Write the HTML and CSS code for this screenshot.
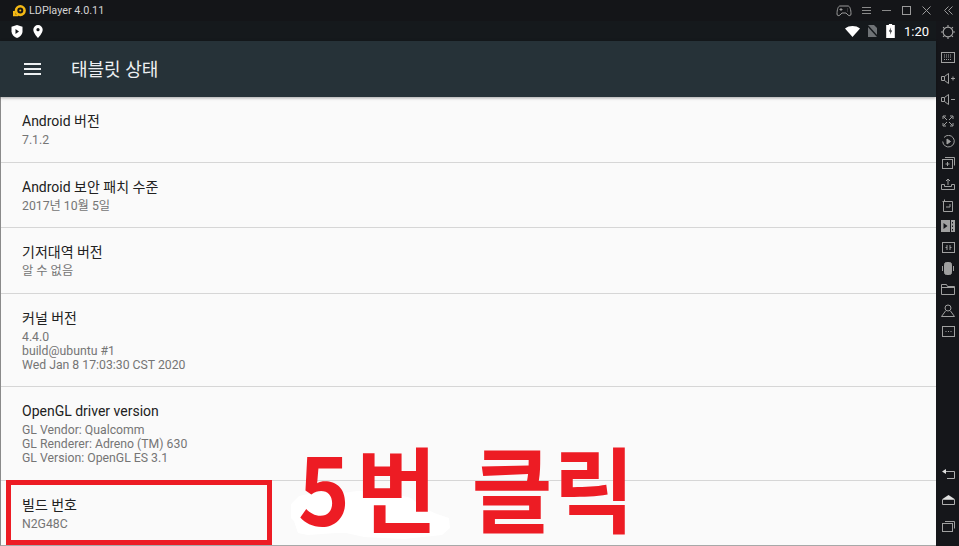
FILE: index.html
```html
<!DOCTYPE html>
<html lang="ko">

<head>
	<meta charset="utf-8">
	<title>LDPlayer</title>
	<link rel="stylesheet" href="styles.css">
</head>

<body>
	<div class="titlebar">
		<div class="title-left">
			<svg class="logo" width="14" height="12" viewBox="0 0 16 14">
				<path d="M1 7h3v4h3v2H1z" fill="#f5b915" />
				<circle cx="9.500" cy="6.500" r="5" fill="none" stroke="#f5b915" stroke-width="3" />
				<circle cx="9.500" cy="6.500" r="1.200" fill="#f5b915" />
			</svg>
			<span class="title-text">LDPlayer 4.0.11</span>
		</div>
		<div class="title-controls">
			<svg class="pad" width="16" height="12" viewBox="0 0 16 12" fill="none" stroke="#9a9a9a">
				<path d="M4 1h8c2 0 3 4 3 8 0 2-2 2-3 1l-2-2H6l-2 2c-1 1-3 1-3-1 0-4 1-8 3-8z" />
				<path d="M3.500 4.500h3M5 3v3M11 4h.5M11 6h.5" />
			</svg>
			<svg width="9" height="9" viewBox="0 0 9 9" stroke="#8a8a8a"><path d="M0 1.500h9M0 4.500h9M0 7.500h9" /></svg>
			<svg width="9" height="9" viewBox="0 0 9 9" stroke="#8a8a8a"><path d="M0 4.500h9" /></svg>
			<svg width="9" height="9" viewBox="0 0 9 9" fill="none" stroke="#9a9a9a"><rect x=".5" y=".5" width="8" height="8" /></svg>
			<svg width="9" height="9" viewBox="0 0 9 9" stroke="#9a9a9a"><path d="M.5.500l8 8M8.500.500l-8 8" /></svg>
			<svg class="collapse" width="9" height="9" viewBox="0 0 9 9" fill="none" stroke="#9a9a9a"><path d="M4.500.500l-4 4 4 4M8.500.500l-4 4 4 4" /></svg>
		</div>
	</div>
	<div class="frame">
		<div class="android">
			<div class="statusbar">
				<div class="status-left">
					<svg width="12" height="13" viewBox="0 0 12 13">
						<path d="M6 0l5.500 1.800v4.700c0 3-2.500 5.300-5.500 6.500C3 11.800.5 9.500.5 6.500V1.800z" fill="#fff" />
						<path d="M4.500 4l3.500 2.500-3.500 2.500z" fill="#15191c" />
					</svg>
					<svg width="10" height="13" viewBox="0 0 10 13">
						<path d="M5 0a4.700 4.700 0 0 1 4.700 4.700C9.700 8 5 13 5 13S.3 8 .3 4.700A4.700 4.700 0 0 1 5 0z" fill="#fff" />
						<circle cx="5" cy="4.700" r="1.600" fill="#15191c" />
					</svg>
				</div>
				<div class="status-right">
					<svg width="15" height="11" viewBox="0 0 15 11"><path d="M0 2.500C4-.8 11-.8 15 2.500L7.500 11z" fill="#fff" /></svg>
					<svg width="11" height="12" viewBox="0 0 11 12">
						<path d="M1 0h6l3 3v9H1z" fill="#6f7376" />
						<path d="M0 0l11 12" stroke="#15191c" stroke-width="1.500" />
					</svg>
					<svg class="battery" width="9" height="14" viewBox="0 0 8 13">
						<path d="M2.500 0h3v1H8v12H0V1h2.500z" fill="#fff" />
						<path d="M4.500 3L2.500 7h1.500l-.5 3 2-4H4z" fill="#15191c" />
					</svg>
					<span class="clock">1:20</span>
				</div>
			</div>
			<div class="appbar">
				<svg class="menu-icon" width="17" height="12" viewBox="0 0 17 12" fill="#eceff1">
					<rect y="0" width="17" height="2" />
					<rect y="5" width="17" height="2" />
					<rect y="10" width="17" height="2" />
				</svg>
				<div class="appbar-title">태블릿 상태</div>
			</div>
			<div class="list">
				<div class="row row-1">
					<div class="row-title">Android 버전</div>
					<div class="row-value">7.1.2</div>
				</div>
				<div class="row row-1">
					<div class="row-title">Android 보안 패치 수준</div>
					<div class="row-value">2017년 10월 5일</div>
				</div>
				<div class="row row-1">
					<div class="row-title">기저대역 버전</div>
					<div class="row-value">알 수 없음</div>
				</div>
				<div class="row row-3">
					<div class="row-title">커널 버전</div>
					<div class="row-value">4.4.0<br>build@ubuntu #1<br>Wed Jan 8 17:03:30 CST 2020</div>
				</div>
				<div class="row row-3">
					<div class="row-title">OpenGL driver version</div>
					<div class="row-value">GL Vendor: Qualcomm<br>GL Renderer: Adreno (TM) 630<br>GL Version: OpenGL ES 3.1</div>
				</div>
				<div class="row row-last">
					<div class="row-title">빌드 번호</div>
					<div class="row-value">N2G48C</div>
				</div>
			</div>
		</div>
		<div class="sidebar">
			<svg class="gear" width="14" height="14" viewBox="0 0 15 15" fill="none" stroke="#a8a8a8" stroke-width="1.200">
				<circle cx="7.500" cy="7.500" r="5.200" />
				<path d="M7.500 0v2M7.500 13v2M0 7.500h2M13 7.500h2M2.200 2.200l1.400 1.400M11.400 11.400l1.400 1.400M2.200 12.800l1.400-1.400M11.400 3.600l1.400-1.400" />
			</svg>
			<div class="tools">
				<svg width="14" height="11" viewBox="0 0 14 11" fill="none" stroke="#a0a0a0"><rect x=".5" y=".5" width="13" height="10" /><path d="M3 3h8M3 5h8M3 7.500h8" stroke-dasharray="1 1" /></svg>
				<svg width="14" height="11" viewBox="0 0 14 11" fill="none" stroke="#a0a0a0"><path d="M.5 3.500h3l4-3v10l-4-3h-3zM3.500 3.500v4M10 5.500h4M12 3.500v4" /></svg>
				<svg width="14" height="11" viewBox="0 0 14 11" fill="none" stroke="#a0a0a0"><path d="M.5 3.500h3l4-3v10l-4-3h-3zM3.500 3.500v4M10 5.500h4" /></svg>
				<svg width="12" height="12" viewBox="0 0 12 12" fill="none" stroke="#a0a0a0"><path d="M1 4V1h3M8 1h3v3M11 8v3H8M4 11H1V8M1.500 1.500L5 5M10.500 1.500L7 5M10.500 10.500L7 7M1.500 10.500L5 7" /></svg>
				<svg width="13" height="13" viewBox="0 0 13 13" fill="none" stroke="#a0a0a0"><path d="M2 2.500a5.800 5.800 0 1 1-1.300 4" /><path d="M5 4l3.500 2.500L5 9z" fill="#a0a0a0" /></svg>
				<svg width="13" height="12" viewBox="0 0 13 12" fill="none" stroke="#a0a0a0"><rect x=".5" y="2.500" width="10" height="9" /><path d="M3 .5h9.500v8M3.500 7h4M5.500 5v4" /></svg>
				<svg width="14" height="12" viewBox="0 0 14 12" fill="none" stroke="#a0a0a0"><path d="M7 7V1M5 3l2-2 2 2M.5 6.500h3v2h7v-2h3v5H.5z" /></svg>
				<svg width="13" height="13" viewBox="0 0 13 13" fill="none" stroke="#a0a0a0"><path d="M.5 2.500h10v10h-9v-10M2.500.5v2M10.500 12.500v-2M4 8h4V5" /></svg>
				<svg width="14" height="12" viewBox="0 0 14 12"><rect width="14" height="12" fill="#a0a0a0" /><path d="M2.500 3l4 3-4 3z" fill="#15161a" /><path d="M9.500 0v12M11.500 2v1.500M11.500 5.500v1.500M11.500 9v1.500" stroke="#15161a" /></svg>
				<svg width="13" height="11" viewBox="0 0 13 11" fill="none" stroke="#a0a0a0"><rect x=".5" y=".5" width="12" height="10" /><path d="M5 3v5M3.500 5.500H5M8 3v5M8 5.500h1.500" /></svg>
				<svg width="12" height="13" viewBox="0 0 12 13" fill="none" stroke="#a0a0a0"><rect x="2.500" y=".5" width="7" height="12" rx="2" fill="#a0a0a0" /><path d="M.5 4v5M11.500 4v5" /></svg>
				<svg width="14" height="11" viewBox="0 0 14 11" fill="none" stroke="#a0a0a0"><path d="M.5 10.500v-10h5l1 2h7v8zM.5 3.500h13" /></svg>
				<svg width="14" height="13" viewBox="0 0 14 13" fill="none" stroke="#a0a0a0"><circle cx="7" cy="4" r="3" /><path d="M4.500 7L.5 12.500h13L9.500 7" /></svg>
				<svg width="13" height="11" viewBox="0 0 13 11" fill="none" stroke="#a0a0a0"><rect x=".5" y=".5" width="12" height="10" /><path d="M3.500 5.500h6" stroke-dasharray="1 1.500" /></svg>
			</div>
			<div class="nav-tools">
				<svg width="13" height="10" viewBox="0 0 13 10" fill="none" stroke="#b0b0b0"><path d="M4 2.500h8.500v7H5" /><path d="M4 0v5L0 2.500z" fill="#e0e0e0" stroke="none" /></svg>
				<svg width="13" height="10" viewBox="0 0 13 10" fill="none" stroke="#b0b0b0"><path d="M.5 9.500V4.500h12v5z" /><path d="M.5 4L6.500 0l6 4z" fill="#e0e0e0" stroke="none" /></svg>
				<svg width="13" height="11" viewBox="0 0 13 11" fill="none" stroke="#a0a0a0"><rect x=".5" y="2.500" width="10" height="8" /><path d="M3 .5h9.500v7" /></svg>
			</div>
		</div>
	</div>

	<div class="red-box"></div>
	<svg class="smudge" width="160" height="52" viewBox="0 0 160 52">
		<path d="M1 16L8 9l14-3 18-2 12 2 14-2 30 1 24 6 12 10 14 6 12 4 1 10-8 7-38 4-40-2-18-4-10 0-28 2-10-2-4-12-8-8z" fill="#fff" />
	</svg>
	<div class="big-label"><span class="big-num">5</span>번 클릭</div>
</body>

</html>
```

FILE: styles.css
```css
html,
body {
	margin: 0;
	height: 546px;
	overflow: hidden;
}

body {
	position: relative;
	display: flex;
	flex-direction: column;
	background: #15161a;
	font-family: Roboto, "Noto Sans CJK KR", sans-serif;
}

.titlebar {
	height: 21px;
	display: flex;
	justify-content: space-between;
	align-items: center;
	background: #141518;
}

.title-left {
	display: flex;
	align-items: center;
	gap: 3px;
	padding-left: 12px;
}

.title-text {
	font-family: Roboto, sans-serif;
	font-size: 10.800px;
	color: #d4d4d4;
}

.title-controls {
	display: flex;
	align-items: center;
	gap: 11px;
	padding-right: 6px;
}

.title-controls .pad {
	margin-right: -1px;
}

.title-controls .collapse {
	margin-left: 2px;
}

.frame {
	flex: 1;
	display: flex;
	min-height: 0;
}

.android {
	flex: 1;
	display: flex;
	flex-direction: column;
	min-width: 0;
}

.statusbar {
	height: 20px;
	display: flex;
	justify-content: space-between;
	align-items: center;
	background: #15191c;
}

.status-left {
	display: flex;
	align-items: center;
	gap: 10px;
	padding-left: 11px;
}

.status-right {
	display: flex;
	align-items: center;
	gap: 7px;
	padding-right: 7px;
}

.battery {
	margin-left: 1px;
}

.clock {
	margin-left: 2px;
	font-size: 13px;
	color: #fff;
}

.appbar {
	height: 56px;
	display: flex;
	align-items: center;
	gap: 30px;
	padding-left: 24px;
	background: #263238;
	box-shadow: 0 1px 3px rgba(0, 0, 0, 0.35);
	position: relative;
}

.appbar-title {
	margin-bottom: 2px;
	font-size: 18px;
	color: #eceff1;
}

.list {
	flex: 1;
	background: #fafafa;
	border-left: 1px solid #8a8a8a;
	border-bottom: 1px solid #a8a8a8;
	min-height: 0;
}

.row {
	box-sizing: border-box;
	padding-left: 21px;
	border-bottom: 1px solid #d6d6d6;
}

.row-1 {
	height: 65.500px;
	padding-top: 14px;
}

.row-3 {
	height: 93.500px;
	padding-top: 14px;
}

.row-last {
	border-bottom: none;
	padding-top: 14px;
}

.row-title {
	font-size: 14px;
	line-height: 20px;
	color: #212121;
}

.row-value {
	font-size: 12.250px;
	line-height: 14px;
	margin-top: 2px;
	color: #757575;
}

.sidebar {
	box-sizing: border-box;
	width: 23px;
	padding-left: 1px;
	display: flex;
	flex-direction: column;
	align-items: center;
	background: #15161a;
}

.gear {
	margin-top: 4px;
}

.tools {
	margin-top: 8px;
	display: grid;
	grid-auto-rows: 21.100px;
	justify-items: center;
	align-items: center;
}

.nav-tools {
	margin-top: auto;
	margin-bottom: 14px;
	display: flex;
	flex-direction: column;
	align-items: center;
	gap: 16px;
}

.red-box {
	position: absolute;
	left: 6px;
	top: 480px;
	width: 256px;
	height: 55px;
	border: 5px solid #ed1c24;
}

.smudge {
	position: absolute;
	left: 291px;
	top: 487px;
}

.big-label {
	position: absolute;
	left: 298px;
	top: 431px;
	font-family: "Noto Sans CJK KR", sans-serif;
	font-size: 88px;
	line-height: 110px;
	font-weight: 700;
	letter-spacing: 1px;
	word-spacing: 8px;
	white-space: nowrap;
	color: #ed1c24;
	transform: scaleY(1.06);
}

.big-num {
	margin-right: 5px;
}
```
